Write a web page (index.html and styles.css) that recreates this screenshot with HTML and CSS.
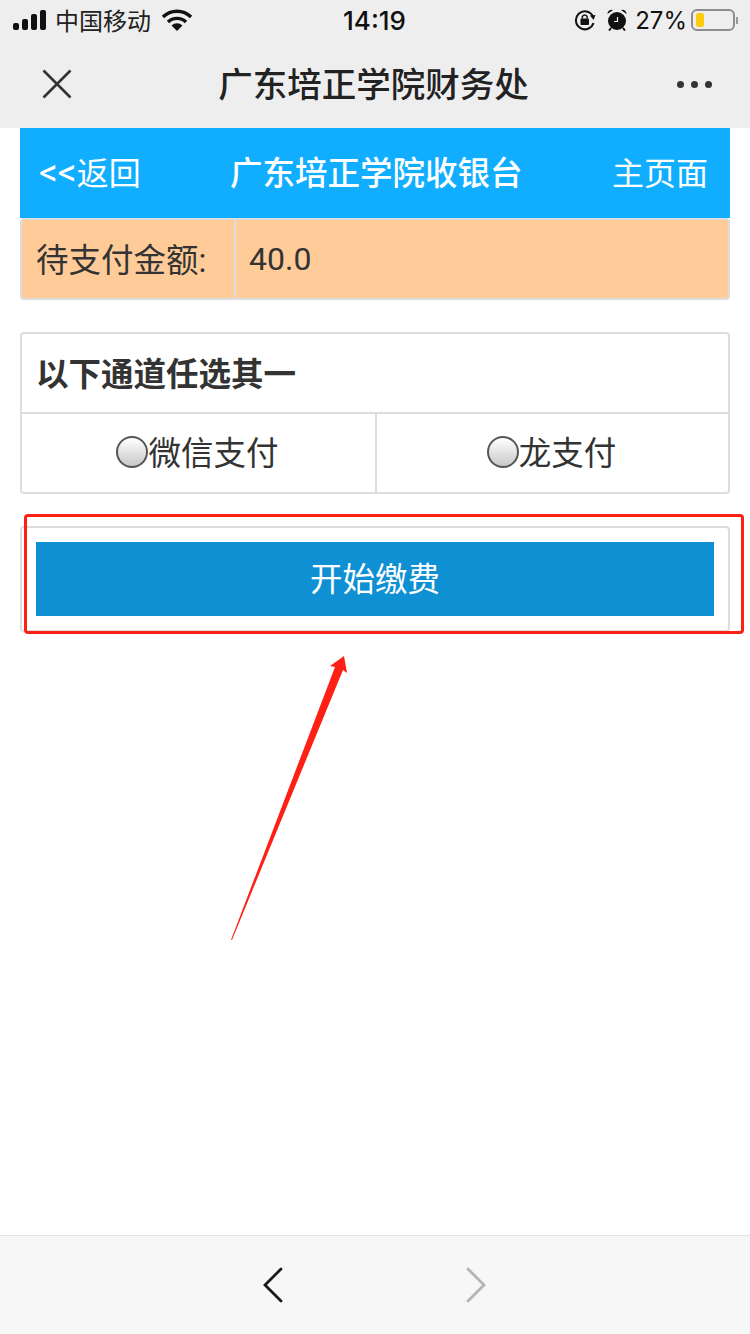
FILE: index.html
```html
<!DOCTYPE html>
<html lang="zh-CN">
<head>
  <meta charset="UTF-8">
  <title>广东培正学院财务处</title>
  <link rel="stylesheet" href="styles.css">
</head>
<body>
  <div class="top">
    <div class="status">
      <div class="status-left">
        <svg class="signal" width="34" height="20" viewBox="0 0 34 20">
          <rect x="0" y="13" width="6" height="7" rx="2"/>
          <rect x="9" y="9" width="6" height="11" rx="2"/>
          <rect x="18" y="4" width="6" height="16" rx="2"/>
          <rect x="27" y="0" width="6" height="20" rx="2"/>
        </svg>
        <span class="carrier">中国移动</span>
        <svg class="wifi" width="30" height="22" viewBox="0 0 30 22">
          <path d="M1 8 A20 20 0 0 1 29 8" fill="none" stroke="#111" stroke-width="3.4"/>
          <path d="M6 13 A13 13 0 0 1 24 13" fill="none" stroke="#111" stroke-width="3.4"/>
          <path d="M9.5 16.5 A8 8 0 0 1 20.500 16.500 L15 22 Z" fill="#111"/>
        </svg>
      </div>
      <div class="time">14:19</div>
      <div class="status-right">
        <svg width="22" height="22" viewBox="0 0 22 22">
          <path d="M18.800 7 A9 9 0 1 0 19.500 14" fill="none" stroke="#111" stroke-width="2"/>
          <path d="M16 6.500 L21.500 6 L19.500 11 Z" fill="#111"/>
          <rect x="6.500" y="9.500" width="8.500" height="6.500" rx="1" fill="#111"/>
          <path d="M8.300 9.500 V8 A2.500 2.500 0 0 1 13.200 8 V9.500" fill="none" stroke="#111" stroke-width="1.500"/>
        </svg>
        <svg class="alarm" width="20" height="22" viewBox="0 0 20 22">
          <circle cx="10" cy="12" r="9" fill="#111"/>
          <path d="M0.500 5 A4 4 0 0 1 6 1 Z M19.500 5 A4 4 0 0 0 14 1 Z" fill="#111"/>
          <path d="M4 19 L2 21.500 M16 19 L18 21.500" stroke="#111" stroke-width="2"/>
          <path d="M10.500 8 V12.500 H7" fill="none" stroke="#eee" stroke-width="1.200"/>
        </svg>
        <span class="percent">27%</span>
        <div class="battery"><div class="battery-level"></div></div>
        <div class="battery-tip"></div>
      </div>
    </div>
    <div class="nav">
      <svg width="30" height="30" viewBox="0 0 30 30">
        <path d="M1.500 1.500 L28.500 28.500 M28.500 1.500 L1.500 28.500" stroke="#333" stroke-width="2.600" fill="none"/>
      </svg>
      <div class="nav-title">广东培正学院财务处</div>
      <div class="dots"><i></i><i></i><i></i></div>
    </div>
  </div>

  <div class="main">
    <div class="header">
      <span><span class="back-arrows">&lt;&lt;</span>返回</span>
      <span class="header-title">广东培正学院收银台</span>
      <span>主页面</span>
    </div>

    <div class="amount">
      <div class="amount-label">待支付金额:</div>
      <div class="amount-value">40.0</div>
    </div>

    <div class="card channels">
      <div class="channels-title">以下通道任选其一</div>
      <div class="channels-row">
        <label class="channel"><span class="radio"></span>微信支付</label>
        <label class="channel"><span class="radio"></span>龙支付</label>
      </div>
    </div>

    <div class="card pay">
      <button class="pay-button">开始缴费</button>
    </div>

    <!-- 标注:红框和箭头 -->
    <div class="mark-box"></div>
    <svg class="mark-arrow" width="120" height="290" viewBox="0 0 120 290">
      <path d="M1 285 L105 12 L100 11 L114 1 L117 18 L113 15 L2 285 Z" fill="#fe2015"/>
    </svg>
  </div>

  <div class="bottom">
    <svg width="24" height="36" viewBox="0 0 24 36">
      <path d="M19 2 L3 18 L19 34" fill="none" stroke="#1a1a1a" stroke-width="2.800" stroke-linecap="round"/>
    </svg>
    <svg width="24" height="36" viewBox="0 0 24 36">
      <path d="M5 2 L21 18 L5 34" fill="none" stroke="#b4b4b4" stroke-width="2.800" stroke-linecap="round"/>
    </svg>
  </div>
</body>
</html>
```

FILE: styles.css
```css
* {
  box-sizing: border-box;
}

body {
  font-family: Roboto, 'Noto Sans CJK SC', sans-serif;
  background-color: white;
  color: #333;
  margin: 0;
  height: 1334px;
  display: flex;
  flex-direction: column;
  overflow: hidden;
}

.top {
  height: 128px;
  background-color: #eeeeee;
}

.status {
  height: 40px;
  padding: 0 12px 0 13px;
  display: flex;
  align-items: center;
  justify-content: space-between;
  color: #111;
  font-size: 24px;
}

.status-left,
.status-right {
  width: 300px;
  display: flex;
  align-items: center;
}

.status-left svg {
  fill: #111;
}

.carrier {
  margin-left: 8px;
  padding-bottom: 2px;
  color: #222;
}

.wifi {
  margin-left: 11px;
}

.time {
  margin-right: 2px;
  font-family: Inter, sans-serif;
  font-weight: 500;
  font-size: 26px;
}

.status-right {
  justify-content: flex-end;
}

.alarm {
  margin-left: 11px;
}

.percent {
  margin-left: 8px;
  font-family: Inter, sans-serif;
  font-weight: 400;
}

.battery {
  width: 44px;
  height: 22px;
  margin-left: 4px;
  padding: 2px 3px;
  border: 2px solid #8d8d8d;
  border-radius: 6px;
}

.battery-level {
  width: 8px;
  height: 100%;
  background-color: #fdcb0a;
  border-radius: 2px;
}

.battery-tip {
  width: 2px;
  height: 7px;
  margin-left: 1px;
  background-color: #999;
}

.nav {
  height: 88px;
  padding: 0 38px 0 42px;
  display: flex;
  align-items: center;
  justify-content: space-between;
}

.nav-title {
  font-size: 34.500px;
  font-weight: 500;
  color: #222;
  padding-bottom: 4px;
  margin-right: 2px;
}

.dots {
  display: flex;
  gap: 7px;
}

.dots i {
  width: 7px;
  height: 7px;
  border-radius: 50%;
  background-color: #333;
}

.main {
  flex: 1;
  padding: 0 20px;
  position: relative;
}

.header {
  height: 90px;
  padding: 0 22px 5px 19px;
  display: flex;
  align-items: center;
  justify-content: space-between;
  background-color: #11aeff;
  color: white;
  font-size: 32px;
}

.back-arrows {
  font-size: 37px;
  line-height: 1;
}

.header-title {
  font-size: 32.500px;
  font-weight: 500;
}

.amount {
  height: 82px;
  display: flex;
  align-items: center;
  background-color: #ffcc99;
  border: 2px solid #dddddd;
  border-radius: 4px;
  font-size: 32.500px;
}

.amount-label {
  width: 214px;
  height: 100%;
  padding: 0 0 4px 14px;
  display: flex;
  align-items: center;
  border-right: 2px solid #dddddd;
}

.amount-value {
  padding-left: 13px;
  font-size: 32px;
}

.card {
  border: 2px solid #dddddd;
  border-radius: 4px;
}

.channels {
  margin-top: 32px;
  height: 162px;
}

.channels-title {
  height: 80px;
  padding: 0 0 4px 14px;
  display: flex;
  align-items: center;
  font-size: 32.500px;
  font-weight: 700;
  border-bottom: 2px solid #dddddd;
}

.channels-row {
  height: 78px;
  display: flex;
}

.channel {
  flex: 1;
  padding: 0 2px 6px 0;
  display: flex;
  align-items: center;
  justify-content: center;
  font-size: 32.500px;
}

.channel + .channel {
  flex: 0 0 353px;
  border-left: 2px solid #dddddd;
}

.radio {
  width: 32px;
  height: 32px;
  margin-top: 4px;
  border: 2px solid #555;
  border-radius: 50%;
  background: linear-gradient(#ffffff, #c8c8c8);
}

.pay {
  margin-top: 32px;
  height: 106px;
  padding: 14px;
}

.pay-button {
  display: block;
  width: 100%;
  height: 74px;
  padding: 0 0 5px;
  border: none;
  background-color: #0e90d2;
  color: white;
  font-family: inherit;
  font-size: 32.500px;
}

.mark-box {
  position: absolute;
  left: 24px;
  top: 386px;
  width: 720px;
  height: 120px;
  border: 3px solid #fe2015;
  border-radius: 4px;
}

.mark-arrow {
  position: absolute;
  left: 230px;
  top: 527px;
}

.bottom {
  height: 99px;
  padding-left: 262px;
  display: flex;
  align-items: center;
  gap: 177px;
  background-color: #f7f7f7;
  border-top: 1px solid #e2e2e2;
}
```
